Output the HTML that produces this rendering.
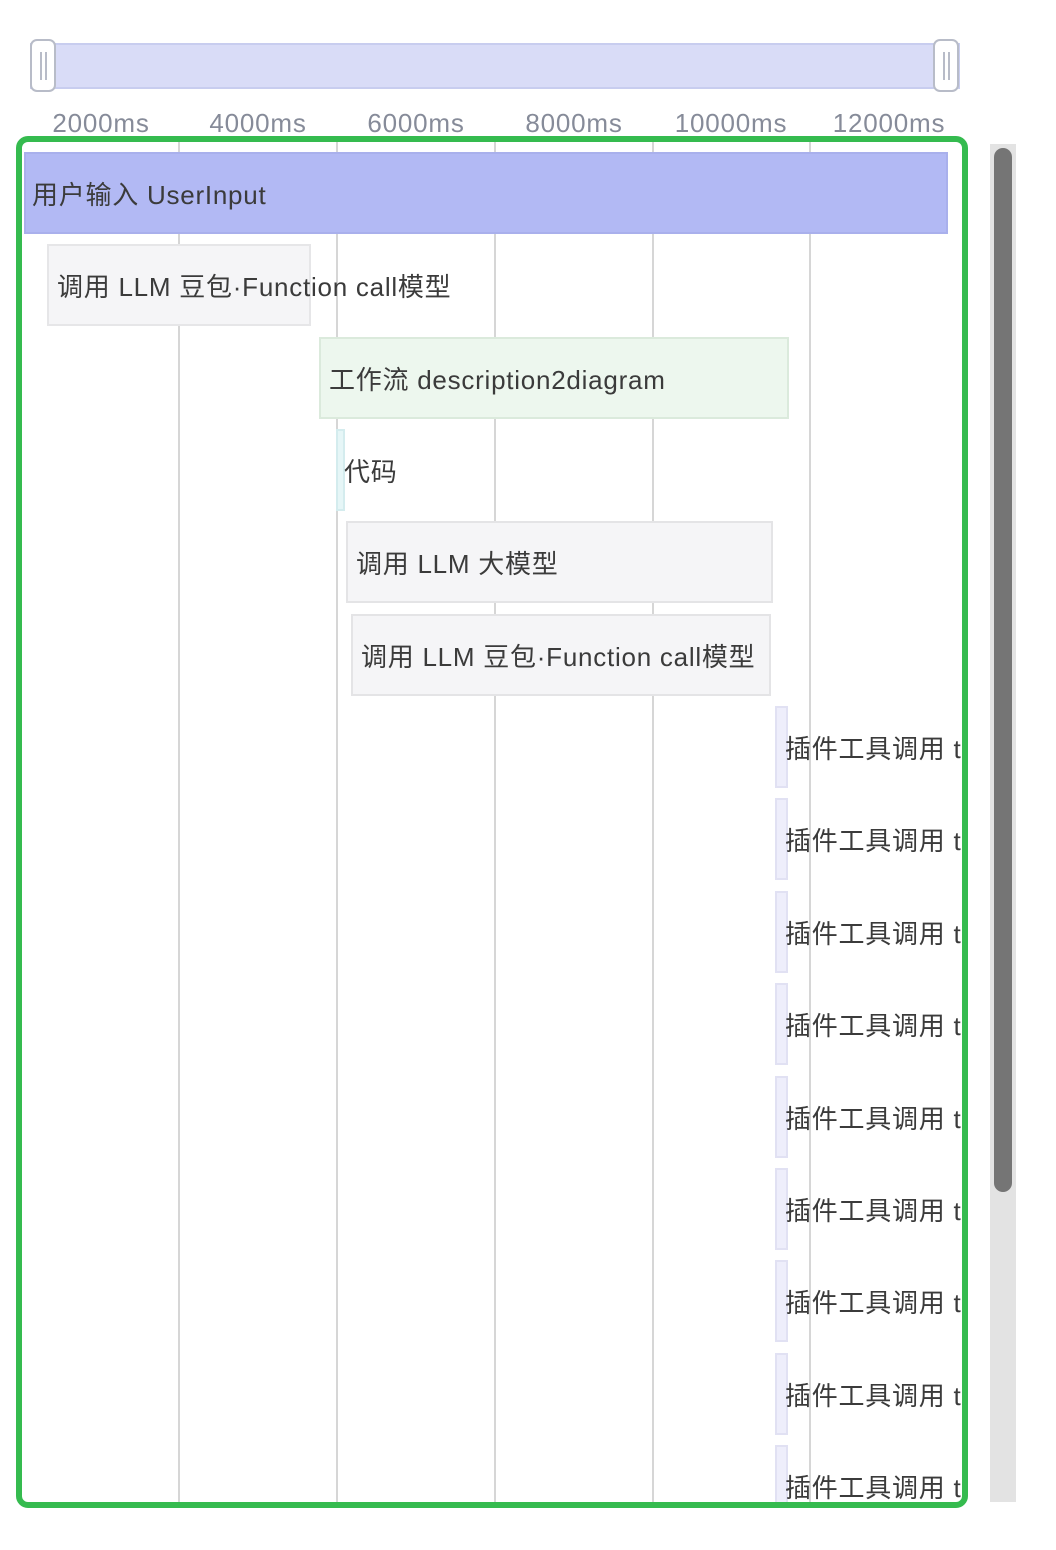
<!DOCTYPE html>
<html><head><meta charset="utf-8"><style>
body{margin:0;width:1056px;height:1550px;background:#fff;position:relative;overflow:hidden;font-family:"Liberation Sans","Noto Sans CJK SC",sans-serif}
.a{position:absolute}
.lbl{position:absolute;top:108px;font-size:26px;letter-spacing:0.8px;color:#868b99;width:140px;text-align:center}
.clip{position:absolute;left:22px;top:142px;width:940px;height:1360px;overflow:hidden}
.g{position:absolute;top:0;width:2px;height:1360px;background:#d6d6d6}
.b{position:absolute;height:80px;box-sizing:border-box;border:2px solid;font-size:26px;letter-spacing:0.75px;color:#3b3b3b;line-height:82px;white-space:nowrap}
.b span{position:absolute;left:8px;top:0}
.p{background:#eeeefb;border-color:#e1e1f3;width:13px}
</style></head><body>
<div class="a" style="left:30px;top:43px;width:930px;height:46px;background:#d9dcf7;border:2px solid #c8cdef;box-sizing:border-box"></div>
<div class="a" style="left:30px;top:39px;width:26px;height:53px;border:2px solid #b8bcc8;border-radius:7px;background:#fff;box-sizing:border-box"><div class="a" style="left:8px;top:11px;width:2px;height:28px;background:#b8bcc8"></div><div class="a" style="left:13px;top:11px;width:2px;height:28px;background:#b8bcc8"></div></div>
<div class="a" style="left:933px;top:39px;width:26px;height:53px;border:2px solid #b8bcc8;border-radius:7px;background:#fff;box-sizing:border-box"><div class="a" style="left:8px;top:11px;width:2px;height:28px;background:#b8bcc8"></div><div class="a" style="left:13px;top:11px;width:2px;height:28px;background:#b8bcc8"></div></div>
<div class="lbl" style="left:31px">2000ms</div>
<div class="lbl" style="left:188px">4000ms</div>
<div class="lbl" style="left:346px">6000ms</div>
<div class="lbl" style="left:504px">8000ms</div>
<div class="lbl" style="left:661px">10000ms</div>
<div class="lbl" style="left:819px">12000ms</div>
<div class="a" style="left:990px;top:144px;width:26px;height:1358px;background:#e3e3e3"></div>
<div class="a" style="left:994px;top:148px;width:18px;height:1044px;background:#757575;border-radius:9px"></div>
<div class="clip">
<div class="g" style="left:156px"></div><div class="g" style="left:314px"></div><div class="g" style="left:472px"></div><div class="g" style="left:630px"></div><div class="g" style="left:787px"></div>
<div class="b" style="left:2px;top:10px;width:924px;height:82px;background:#b2b9f4;border-color:#a9b0ec"><span style="left:6px">用户输入 UserInput</span></div>
<div class="b" style="left:25px;top:102px;width:264px;height:82px;background:#f5f5f7;border-color:#e6e6e8"><span>调用 LLM 豆包·Function call模型</span></div>
<div class="b" style="left:297px;top:195px;width:470px;height:82px;background:#edf7ee;border-color:#dbeadc"><span>工作流 description2diagram</span></div>
<div class="b" style="left:314px;top:287px;width:9px;height:82px;background:#e6f6f7;border-color:#d4ecee"><span style="left:6px">代码</span></div>
<div class="b" style="left:324px;top:379px;width:427px;height:82px;background:#f5f5f7;border-color:#e4e4e6"><span>调用 LLM 大模型</span></div>
<div class="b" style="left:329px;top:472px;width:420px;height:82px;background:#f5f5f7;border-color:#e4e4e6"><span>调用 LLM 豆包·Function call模型</span></div>
<div class="b p" style="left:753px;top:564px;height:82px"><span>插件工具调用 t</span></div>
<div class="b p" style="left:753px;top:656px;height:82px"><span>插件工具调用 t</span></div>
<div class="b p" style="left:753px;top:749px;height:82px"><span>插件工具调用 t</span></div>
<div class="b p" style="left:753px;top:841px;height:82px"><span>插件工具调用 t</span></div>
<div class="b p" style="left:753px;top:934px;height:82px"><span>插件工具调用 t</span></div>
<div class="b p" style="left:753px;top:1026px;height:82px"><span>插件工具调用 t</span></div>
<div class="b p" style="left:753px;top:1118px;height:82px"><span>插件工具调用 t</span></div>
<div class="b p" style="left:753px;top:1211px;height:82px"><span>插件工具调用 t</span></div>
<div class="b p" style="left:753px;top:1303px;height:82px"><span>插件工具调用 t</span></div>
</div>
<div class="a" style="left:16px;top:136px;width:952px;height:1372px;border:6px solid #35bb4f;border-radius:12px;box-sizing:border-box"></div>
</body></html>
